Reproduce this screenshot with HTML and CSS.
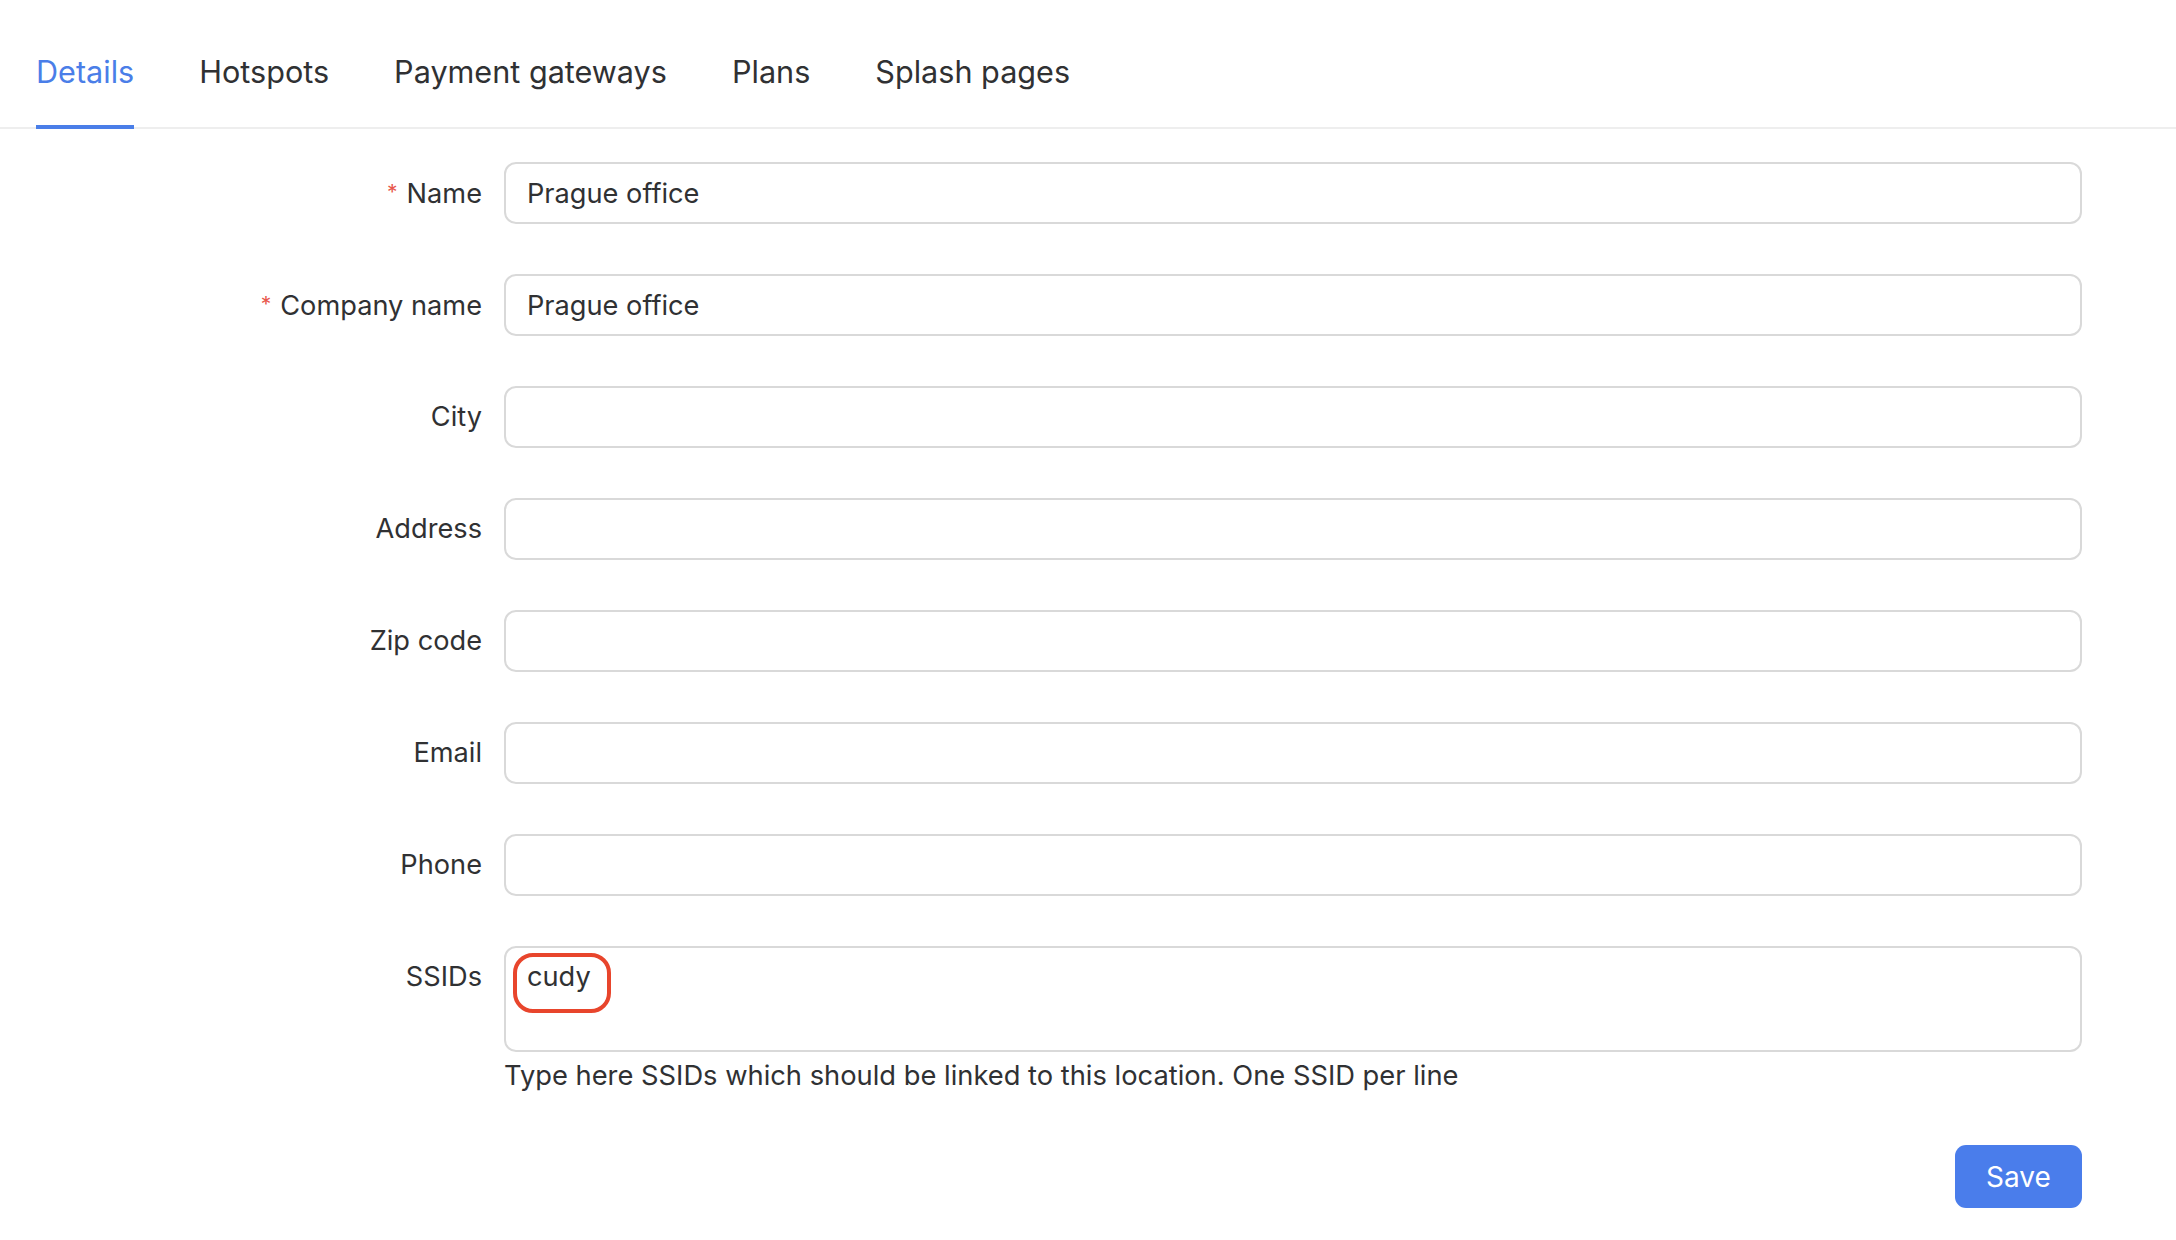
FILE: index.html
```html
<!DOCTYPE html>
<html lang="en">
<head>
<meta charset="utf-8">
<title>Location details</title>
<link rel="stylesheet" href="styles.css">
</head>
<body>
<nav class="tabs">
  <div class="tab active">Details</div>
  <div class="tab">Hotspots</div>
  <div class="tab">Payment gateways</div>
  <div class="tab">Plans</div>
  <div class="tab">Splash pages</div>
</nav>
<form class="form">
  <label class="label"><span class="req">*</span>Name</label>
  <input class="field" type="text" value="Prague office">

  <label class="label"><span class="req">*</span>Company name</label>
  <input class="field" type="text" value="Prague office">

  <label class="label">City</label>
  <input class="field" type="text" value="">

  <label class="label">Address</label>
  <input class="field" type="text" value="">

  <label class="label">Zip code</label>
  <input class="field" type="text" value="">

  <label class="label">Email</label>
  <input class="field" type="text" value="">

  <label class="label">Phone</label>
  <input class="field" type="text" value="">

  <label class="label label-top">SSIDs</label>
  <div class="area-wrap">
    <div class="area-box">
      <textarea class="area">cudy</textarea>
      <div class="mark"></div>
    </div>
    <div class="help">Type here SSIDs which should be linked to this location. One SSID per line</div>
    <div class="actions"><button type="button" class="save">Save</button></div>
  </div>
</form>
</body>
</html>
```
FILE: styles.css
```css
html, body {
  margin: 0;
  padding: 0;
  background: #ffffff;
}
body {
  font-family: Inter, "Noto Sans", "Liberation Sans", sans-serif;
  color: #303133;
  width: 2176px;
  height: 1240px;
  overflow: hidden;
}
.tabs {
  display: flex;
  gap: 65px;
  padding-left: 36px;
  border-bottom: 2px solid #eeeeee;
  height: 127px;
  box-sizing: content-box;
}
.tab {
  font-size: 30.6px;
  line-height: 36px;
  padding-top: 54px;
  padding-bottom: 35px;
  border-bottom: 4px solid transparent;
  margin-bottom: -2px;
  color: #303133;
  height: 36px;
}
.tab.active {
  color: #4a7ee8;
  border-bottom-color: #4a7ee8;
}
.form {
  display: grid;
  grid-template-columns: 482px 1578px;
  column-gap: 22px;
  row-gap: 50px;
  margin-top: 33px;
}
.label {
  font-size: 27.2px;
  text-align: right;
  height: 62px;
  line-height: 62px;
  white-space: nowrap;
}
.label-top {
  line-height: 62px;
  height: auto;
}
.req {
  color: #e8574c;
  font-size: 21px;
  margin-right: 9px;
  vertical-align: 3px;
}
.field {
  box-sizing: border-box;
  height: 62px;
  width: 100%;
  border: 2px solid #d9d9d9;
  border-radius: 12px;
  padding: 0 21px;
  font-family: inherit;
  font-size: 27.2px;
  color: #303133;
  outline: none;
  margin: 0;
  background: #fff;
}
.area-wrap {
  display: flex;
  flex-direction: column;
}
.area-box {
  position: relative;
  height: 106px;
}
.area {
  box-sizing: border-box;
  width: 100%;
  height: 106px;
  border: 2px solid #d9d9d9;
  border-radius: 12px;
  padding: 9px 21px;
  font-family: inherit;
  font-size: 27.2px;
  line-height: 40px;
  color: #303133;
  resize: none;
  outline: none;
  margin: 0;
  display: block;
}
.mark {
  position: absolute;
  left: 9px;
  top: 7px;
  width: 98px;
  height: 60px;
  box-sizing: border-box;
  border: 4px solid #e8452c;
  border-radius: 20px;
}
.help {
  font-size: 27.3px;
  line-height: 40px;
  margin-top: 4px;
}
.actions {
  display: flex;
  justify-content: flex-end;
  margin-top: 49px;
}
.save {
  width: 127px;
  height: 63px;
  border: none;
  border-radius: 11px;
  background: #4a7deb;
  color: #ffffff;
  font-family: inherit;
  font-size: 28px;
  cursor: pointer;
  padding: 0;
}
```
